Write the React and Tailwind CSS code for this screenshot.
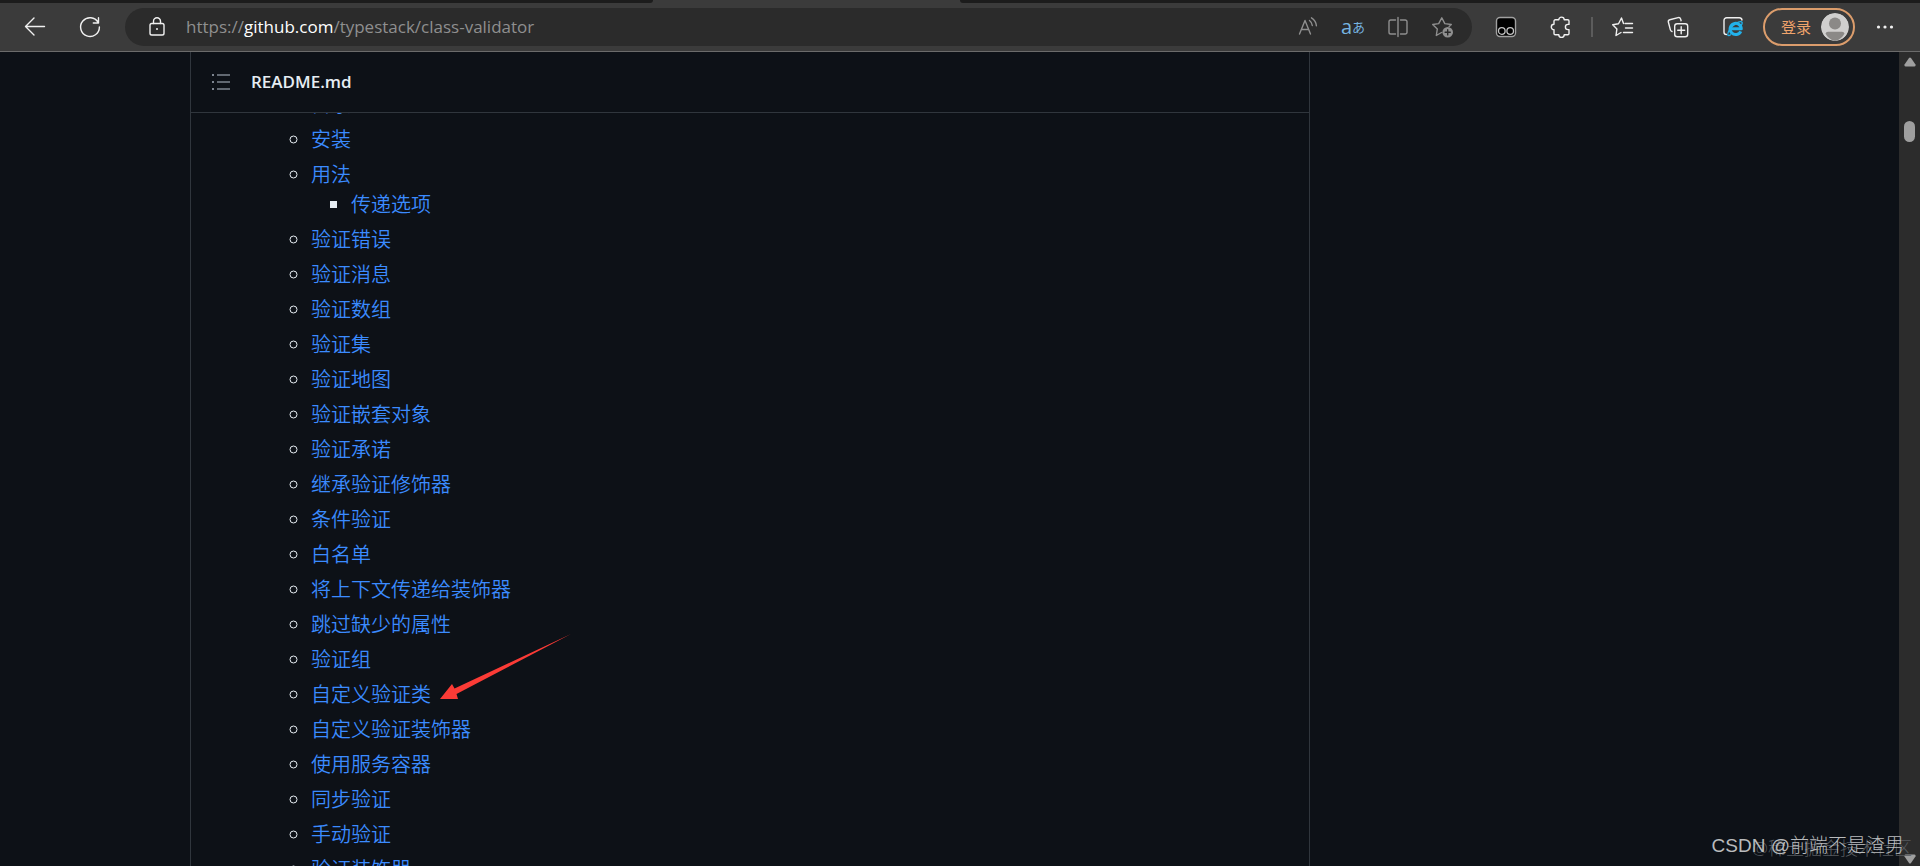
import React from "react";

const navItems = [
  { label: "目录" },
  { label: "安装" },
  { label: "用法", children: ["传递选项"] },
  { label: "验证错误" },
  { label: "验证消息" },
  { label: "验证数组" },
  { label: "验证集" },
  { label: "验证地图" },
  { label: "验证嵌套对象" },
  { label: "验证承诺" },
  { label: "继承验证修饰器" },
  { label: "条件验证" },
  { label: "白名单" },
  { label: "将上下文传递给装饰器" },
  { label: "跳过缺少的属性" },
  { label: "验证组" },
  { label: "自定义验证类", marked: true },
  { label: "自定义验证装饰器" },
  { label: "使用服务容器" },
  { label: "同步验证" },
  { label: "手动验证" },
  { label: "验证装饰器" },
];

const IconButton = ({ label, className = "text-[#f0f0f0]", children }) => (
  <button
    type="button"
    aria-label={label}
    className={`flex h-6 w-6 shrink-0 items-center justify-center ${className}`}
  >
    <svg
      viewBox="0 0 24 24"
      className="h-6 w-6"
      fill="none"
      stroke="currentColor"
      strokeWidth="1.4"
      strokeLinecap="round"
      strokeLinejoin="round"
    >
      {children}
    </svg>
  </button>
);

const AddressBar = () => (
  <div className="ml-[23px] flex h-[38px] min-w-0 flex-1 items-center rounded-full bg-[#2b2b2b] pr-[17px] pl-5">
    <IconButton label="查看站点信息">
      <rect x="5" y="8.5" width="14" height="11.5" rx="1.8" />
      <path d="M8.5 8.5V6.2a3.5 3.5 0 0 1 7 0v2.3" />
      <circle cx="12" cy="14" r="1" fill="currentColor" stroke="none" />
    </IconButton>
    <a
      href="#readme"
      className="ml-[17px] flex-1 truncate text-[17px] leading-6 text-[#8f8f8f]"
    >
      https://<span className="text-white">github.com</span>
      /typestack/class-validator
    </a>
    <div className="flex gap-[21px]">
      <IconButton label="大声朗读" className="text-[#8f8f8f]">
        <path d="M3.5 19 9 5.5 14.5 19M5.4 14.5h7.2" />
        <path d="M13.5 5.5c1.8 1.3 2.6 3 2.8 5M15.5 2.8c3.2 2 4.7 4.7 4.9 8" />
      </IconButton>
      <button
        type="button"
        aria-label="翻译"
        className="flex h-6 w-6 items-center justify-center whitespace-nowrap text-[#76b4e0]"
      >
        <span className="text-xl leading-6">a</span>
        <span className="text-[13px] leading-6">あ</span>
      </button>
      <IconButton label="分屏" className="text-[#8f8f8f]">
        <path d="M9.5 5H4.8A1.8 1.8 0 0 0 3 6.8v10.4A1.8 1.8 0 0 0 4.8 19h4.7M14.5 5h4.7A1.8 1.8 0 0 1 21 6.8v10.4a1.8 1.8 0 0 1-1.8 1.8h-4.7M12 2.5v19" />
      </IconButton>
      <IconButton label="添加到收藏夹" className="text-[#8f8f8f]">
        <path d="M10.5 17.5 5.3 20.5l1-6.5L1.7 9.5l6-.9L10.8 2.8l3 5.8 6.5.9-2.2 2" />
        <circle cx="16.7" cy="17.3" r="5.3" fill="currentColor" stroke="none" />
        <path d="M16.7 14.7v5.2M14.1 17.3h5.2" stroke="#2b2b2b" />
      </IconButton>
    </div>
  </div>
);

const Toolbar = () => (
  <header className="shrink-0 border-b border-[#6b6b6b] bg-[#3b3b3b]">
    <div className="flex h-[3px]">
      <div className="w-[34%] rounded-br bg-[#1c1c1c]" />
      <div className="w-[16%]" />
      <div className="flex-1 rounded-bl bg-[#1c1c1c]" />
    </div>
    <div className="flex h-12 items-center px-[23px]">
      <IconButton label="后退">
        <path d="M21.5 11.5H2.5M11 3 2.5 11.5 11 20" />
      </IconButton>
      <div className="ml-[31px]">
        <IconButton label="刷新">
          <path d="M20.2 7.5A9.4 9.4 0 1 0 21.4 12M20.5 2.8v5.2h-5.2" />
        </IconButton>
      </div>
      <AddressBar />
      <div className="ml-[22px] flex gap-[31px]">
        <IconButton label="油猴">
          <rect x="2.5" y="2.5" width="19" height="19" rx="3.5" fill="#000" stroke="#a0a0a0" />
          <circle cx="7.8" cy="16" r="3.3" stroke="#c4c4c4" strokeWidth="1.3" />
          <circle cx="16.2" cy="16" r="3.3" stroke="#c4c4c4" strokeWidth="1.3" />
        </IconButton>
        <IconButton label="扩展">
          <path d="M6.3 4.8h3.5a2.7 2.7 0 0 1 5.4 0h3.5a1.3 1.3 0 0 1 1.3 1.3v3.3h-1a2.6 2.6 0 0 0 0 5.2h1v3.8a1.3 1.3 0 0 1-1.3 1.3h-3.5a2.7 2.7 0 0 1-5.4 0H6.3A1.3 1.3 0 0 1 5 18.4v-3.7a2.7 2.7 0 0 1 0-5.4V6.1a1.3 1.3 0 0 1 1.3-1.3z" />
        </IconButton>
      </div>
      <div className="mx-[18px] h-5 w-0.5 bg-[#5c5c5c]" />
      <div className="flex gap-[31px]">
        <IconButton label="收藏夹">
          <path d="M14 8.5h7.5M14.5 13h7M12.5 17.5h9" />
          <path d="M12.5 8.5 10.5 3 7.5 8.8l-5.8.9 4.2 4.2L5 20.5l5-3" />
        </IconButton>
        <IconButton label="集锦">
          <rect x="8.7" y="8.7" width="13" height="13" rx="2.5" />
          <path d="M15.2 11.7v7M11.7 15.2h7M6 16.5c-.8-.2-1.4-.8-1.6-1.6L2.4 7.2c-.3-1.1.3-2.1 1.4-2.4l8.3-2.2c1.1-.3 2.1.2 2.5 1.3l.5 1.8" />
        </IconButton>
        <IconButton label="Internet Explorer 模式">
          <path d="M5.5 19.5A2.5 2.5 0 0 1 3 17V5.5A2.7 2.7 0 0 1 5.7 2.8h12.6A2.7 2.7 0 0 1 21 5" />
          <path
            d="M19.8 16.3a5.6 5.6 0 1 1 .5-2.5H9.5"
            stroke="#22b1ea"
            strokeWidth="3"
            strokeLinecap="butt"
          />
          <path
            d="M9.5 19.8c-1.2 1-2.5 1-2.7.1-.5-2.5 3-8.3 8.2-11.5 3.5-2.2 6-2.4 6.2-.8.1.9-.3 1.9-.9 2.8"
            stroke="#22b1ea"
            strokeWidth="1.3"
          />
        </IconButton>
      </div>
      <button
        type="button"
        className="ml-[18px] flex h-[38px] shrink-0 items-center gap-2.5 rounded-full border-2 border-[#dc9d6c] pr-1 pl-4 text-[15px] leading-6 text-[#f0a46c]"
      >
        登录
        <svg viewBox="0 0 28 28" className="h-7 w-7 rounded-full">
          <circle cx="14" cy="14" r="14" fill="#d0cfce" />
          <circle cx="14" cy="10.5" r="6" fill="#8b8987" />
          <path d="M4.5 20.5Q5 18.8 7 18.8h14q2 0 2.5 1.7A14 14 0 0 1 14 28a14 14 0 0 1-9.5-7.5z" fill="#8b8987" />
        </svg>
      </button>
      <div className="ml-[18px]">
        <IconButton label="设置及其他">
          <g fill="currentColor" stroke="none">
            <circle cx="5.5" cy="12" r="1.6" />
            <circle cx="12" cy="12" r="1.6" />
            <circle cx="18.5" cy="12" r="1.6" />
          </g>
        </IconButton>
      </div>
    </div>
  </header>
);

const Readme = () => (
  <article
    id="readme"
    className="ml-[190px] flex w-[1120px] flex-col overflow-hidden border-x border-[#30363d]"
  >
    <div className="z-10 flex h-[61px] shrink-0 items-center gap-5 border-b border-[#30363d] bg-[#0d1117] pl-5">
      <button type="button" aria-label="目录" className="text-[#7d8590]">
        <svg viewBox="0 0 20 20" className="h-5 w-5" fill="currentColor">
          <path d="M6 2.2h13v1.6H6zM6 9.2h13v1.6H6zM6 16.2h13v1.6H6zM1 2h2v2H1zM1 9h2v2H1zM1 16h2v2H1z" />
        </svg>
      </button>
      <h2 className="text-[17px] leading-6 font-semibold text-[#e6edf3]">
        README.md
      </h2>
    </div>
    <ul className="-mt-[23px] list-[circle] pl-[120px] text-xl leading-[30px] font-[350] text-[#e6edf3]">
      {navItems.map((item) => (
        <li key={item.label} className="mb-[5px]">
          <a href="#readme" className="text-[#3b8bff]">
            {item.label}
          </a>
          {item.marked && (
            <span className="relative">
              <svg
                viewBox="0 0 134 68"
                className="absolute -top-12 left-2 h-[68px] w-[134px]"
              >
                <path d="M1 66 13 51l2.5 4.5L132 1 17.5 61l1.5 5z" fill="#fb3b36" />
              </svg>
            </span>
          )}
          {item.children && (
            <ul className="list-[square] pl-10">
              {item.children.map((child) => (
                <li key={child}>
                  <a href="#readme" className="text-[#3b8bff]">
                    {child}
                  </a>
                </li>
              ))}
            </ul>
          )}
        </li>
      ))}
    </ul>
  </article>
);

const Scrollbar = () => (
  <div className="flex w-[21px] shrink-0 flex-col items-center bg-[#2c2c2c] pt-[5px] pb-0.5">
    <svg viewBox="0 0 12 10" className="h-2.5 w-3" fill="#9f9f9f">
      <path d="M5 1q1-1 2 0l4.5 6.5Q12 9.5 10.5 9.5h-9Q0 9.5.5 7.5z" />
    </svg>
    <div className="mt-[54px] h-[21px] w-[11px] rounded-full bg-[#9f9f9f]" />
    <svg viewBox="0 0 12 10" className="mt-auto h-2.5 w-3" fill="#9f9f9f">
      <path d="M5 9q1 1 2 0l4.5-6.5Q12 .5 10.5.5h-9Q0 .5.5 2.5z" />
    </svg>
  </div>
);

const App = () => {
  return (
    <div className="relative flex h-screen flex-col overflow-hidden bg-[#0d1117] font-['Open_Sans','Noto_Sans_CJK_SC',sans-serif]">
      <Toolbar />
      <main className="flex min-h-0 flex-1 justify-between">
        <Readme />
        <Scrollbar />
      </main>
      <p className="absolute right-2 bottom-1.5 text-lg leading-6 font-light text-[#565a5f]">
        @稀土掘金技术社区
      </p>
      <p className="absolute right-4 bottom-2 font-['Liberation_Sans','Noto_Sans_CJK_SC',sans-serif] text-[19px] leading-6 font-light text-[#b9bbbd]">
        CSDN @前端不是渣男
      </p>
    </div>
  );
};

export default App;
